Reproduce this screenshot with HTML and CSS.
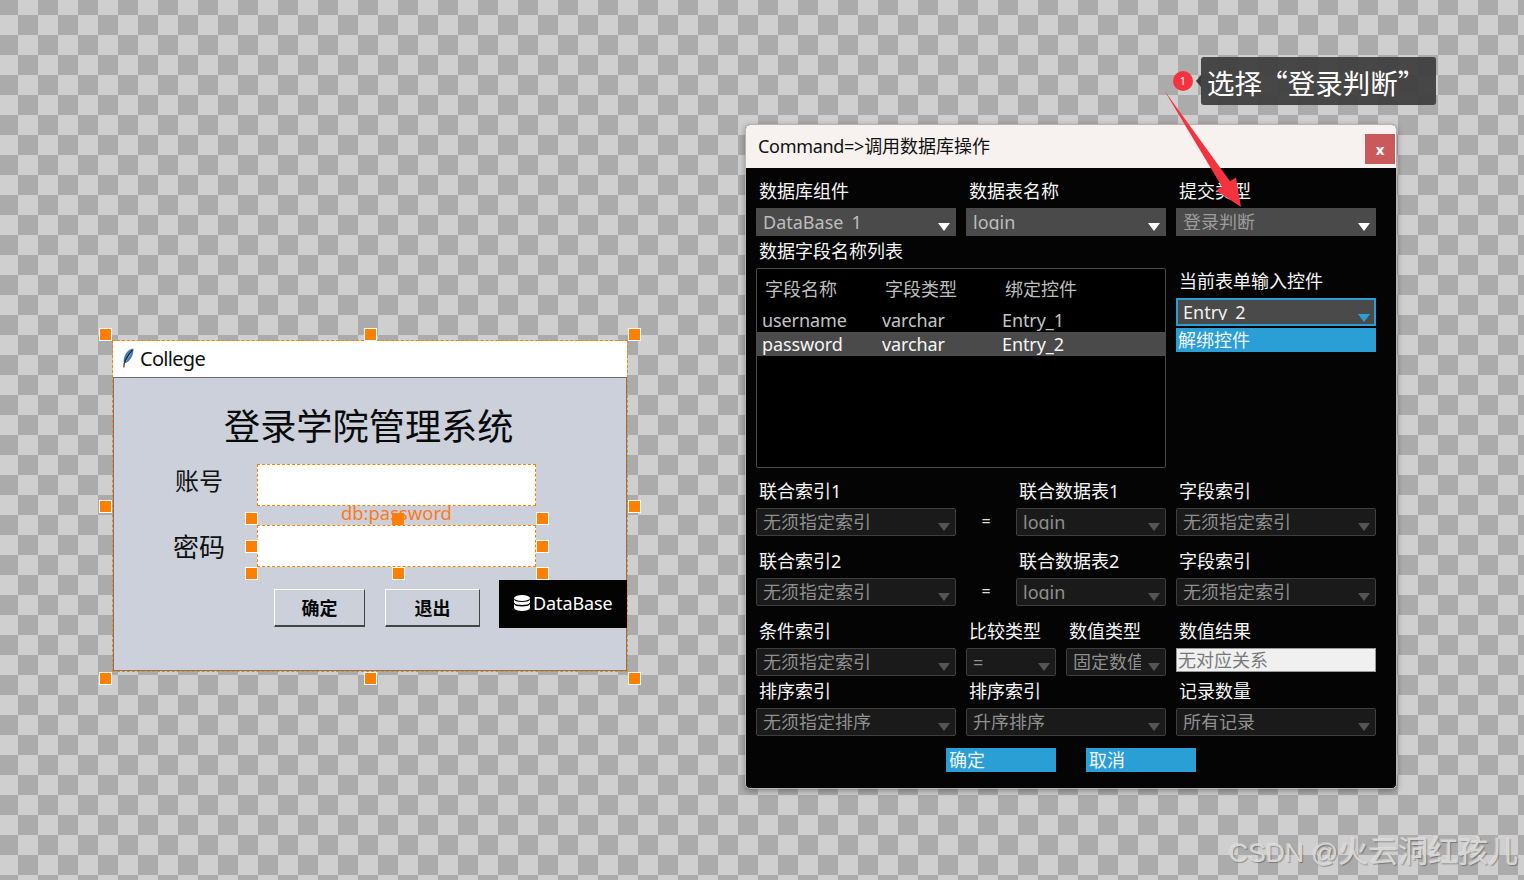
FILE: index.html
```html
<!DOCTYPE html>
<html lang="zh">
<head>
<meta charset="utf-8">
<title>Command</title>
<link rel="stylesheet" href="styles.css">
</head>
<body>
<div class="stage">

  <section class="designer">
    <div class="win">
      <div class="win-title">
        <svg class="feather" viewBox="0 0 12 20" width="12" height="20"><path d="M11.5 0.5C6.5 0.8 2 6 1.5 13L3 15.2C7.5 14 11.8 8 11.5 0.5Z" fill="#4a7fb5"/><path d="M9 4C8 8 5 10 4 13" stroke="#9cc0e0" stroke-width="1" fill="none"/><path d="M10.5 2C7 6 3.8 10.5 2.2 15.5" stroke="#14273a" stroke-width="1.2" fill="none"/><path d="M2.4 14.5L1.8 19.5" stroke="#555" stroke-width="1.4"/></svg>
        <span>College</span>
      </div>
      <div class="win-body"></div>
    </div>
    <div class="w-title">登录学院管理系统</div>
    <div class="w-lab lab1">账号</div>
    <div class="w-lab lab2">密码</div>
    <div class="entry e1"></div>
    <div class="entry e2"></div>
    <button class="tk tk1">确定</button>
    <button class="tk tk2">退出</button>
    <div class="dbbox">
      <svg viewBox="0 0 16 16" width="16" height="16"><ellipse cx="8" cy="3" rx="8" ry="3" fill="#fff"/><path d="M0 4.6C1 6.4 4 7.1 8 7.1S15 6.4 16 4.6V7.6C15 9.4 12 10.1 8 10.1S1 9.4 0 7.6Z" fill="#fff"/><path d="M0 8.9C1 10.7 4 11.4 8 11.4S15 10.7 16 8.9V13C15 15.2 12 16 8 16S1 15.2 0 13Z" fill="#fff"/></svg>
      <span>DataBase</span>
    </div>
    <i class="h h-a"></i><i class="h h-b"></i><i class="h h-c"></i><i class="h h-d"></i>
    <i class="h h-e"></i><i class="h h-f"></i><i class="h h-g"></i><i class="h h-h"></i>
    <i class="h h-i"></i><i class="h h-j flat"></i><i class="h h-k"></i><i class="h h-l"></i>
    <i class="h h-m"></i><i class="h h-n"></i><i class="h h-o"></i><i class="h h-p"></i>
    <div class="dbtag">db:password</div>
  </section>

  <section class="dialog">
    <header class="dlg-head">
      <span><span class="tight">Command=&gt;</span>调用数据库操作</span>
      <button class="close">x</button>
    </header>
    <div class="dlg-body">
      <div class="row labels">
        <label class="w200">数据库组件</label><label class="w200">数据表名称</label><label class="w200">提交类型</label>
      </div>
      <div class="row combos">
        <div class="combo lit w200"><span class="val">DataBase_1</span></div>
        <div class="combo lit w200"><span class="val">login</span></div>
        <div class="combo lit w200 dim"><span class="val">登录判断</span></div>
      </div>
      <div class="row labels l3"><label>数据字段名称列表</label></div>
      <div class="row listrow">
        <div class="list">
          <div class="lhead"><span>字段名称</span><span>字段类型</span><span>绑定控件</span></div>
          <div class="lrow"><span>username</span><span>varchar</span><span>Entry_1</span></div>
          <div class="lrow sel"><span>password</span><span>varchar</span><span>Entry_2</span></div>
        </div>
        <div class="side">
          <label>当前表单输入控件</label>
          <div class="combo lit focus w200"><span class="val">Entry_2</span></div>
          <button class="blue unbind">解绑控件</button>
        </div>
      </div>
      <div class="row labels l5">
        <label class="w200">联合索引1</label><label class="w40"></label><label class="w150">联合数据表1</label><label class="w200">字段索引</label>
      </div>
      <div class="row combos">
        <div class="combo w200"><span class="val">无须指定索引</span></div>
        <div class="eq">=</div>
        <div class="combo w150"><span class="val">login</span></div>
        <div class="combo w200"><span class="val">无须指定索引</span></div>
      </div>
      <div class="row labels l6">
        <label class="w200">联合索引2</label><label class="w40"></label><label class="w150">联合数据表2</label><label class="w200">字段索引</label>
      </div>
      <div class="row combos">
        <div class="combo w200"><span class="val">无须指定索引</span></div>
        <div class="eq">=</div>
        <div class="combo w150"><span class="val">login</span></div>
        <div class="combo w200"><span class="val">无须指定索引</span></div>
      </div>
      <div class="row labels l6">
        <label class="w200">条件索引</label><label class="w90">比较类型</label><label class="w100">数值类型</label><label class="w200">数值结果</label>
      </div>
      <div class="row combos">
        <div class="combo w200"><span class="val">无须指定索引</span></div>
        <div class="combo w90"><span class="val">=</span></div>
        <div class="combo w100"><span class="val">固定数值</span></div>
        <div class="result w200">无对应关系</div>
      </div>
      <div class="row labels l7">
        <label class="w200">排序索引</label><label class="w200">排序索引</label><label class="w200">记录数量</label>
      </div>
      <div class="row combos">
        <div class="combo w200"><span class="val">无须指定排序</span></div>
        <div class="combo w200"><span class="val">升序排序</span></div>
        <div class="combo w200"><span class="val">所有记录</span></div>
      </div>
      <div class="actions">
        <button class="blue act">确定</button>
        <button class="blue act">取消</button>
      </div>
    </div>
  </section>

  <svg class="arrow" viewBox="0 0 100 140" width="100" height="140">
    <path d="M3 10L69 101.3L75 97.5L80 127L55 110.6L61 106.8Z" fill="#f5333f"/>
  </svg>
  <div class="badge">1</div>
  <div class="tip">选择 “登录判断”</div>
  <div class="mark"><span class="mark-latin">CSDN @</span>火云洞红孩儿</div>
</div>
</body>
</html>
```
FILE: styles.css
```css
* { box-sizing: border-box; }
html, body { margin: 0; padding: 0; }
body { font-family: "Noto Sans", "Noto Sans CJK SC", sans-serif; }
button { font: inherit; padding: 0; border: 0; }

.stage {
  position: relative;
  width: 1524px;
  height: 880px;
  overflow: hidden;
  background-color: #cfcfcf;
  background-image: repeating-conic-gradient(#cfcfcf 0 25%, #ababab 0 50%);
  background-size: 40px 40px;
  background-position: -2px -5px;
}

/* form designer canvas */
.designer { position: absolute; left: 0; top: 0; width: 700px; height: 700px; }
.win {
  position: absolute; left: 112px; top: 340px; width: 516px; height: 332px;
  border: 1px dashed #ff8000;
  display: flex; flex-direction: column;
}
.win-title {
  height: 37px; background: #fff; border-bottom: 1px solid #6c6c74;
  display: flex; align-items: center; gap: 6px; padding: 0 0 2px 9px;
  font-size: 20px; color: #111;
  letter-spacing: -0.7px;
}
.win-body { flex: 1; background: #cbd0da; border-left: 1px solid #777; border-right: 1px solid #777; border-bottom: 1px solid #777; }
.w-title { position: absolute; left: 224px; top: 400px; font-size: 36.2px; line-height: 52px; color: #0a0a0a; white-space: nowrap; }
.w-lab { position: absolute; color: #111; line-height: 36px; white-space: nowrap; }
.lab1 { left: 175px; top: 463px; font-size: 24px; }
.lab2 { left: 173px; top: 529px; font-size: 26px; }
.entry { position: absolute; background: #fff; border: 1px dashed #ff8000; left: 257px; width: 279px; }
.e1 { top: 464px; height: 42px; }
.e2 { top: 525px; height: 42px; }
.tk {
  position: absolute; top: 589px; height: 38px; background: #cbd0da; color: #0a0a0a;
  font-size: 18px; font-weight: 700; line-height: 34px;
  border-top: 1px solid #fff; border-left: 1px solid #fff;
  border-right: 1px solid #444; border-bottom: 2px solid #444;
}
.tk1 { left: 274px; width: 91px; }
.tk2 { left: 385px; width: 95px; }
.dbbox {
  position: absolute; left: 499px; top: 580px; width: 128px; height: 48px;
  background: #030303; color: #fff; font-size: 18px; letter-spacing: -0.1px;
  display: flex; align-items: center; gap: 3px; padding: 0 0 2px 15px;
}
.h { position: absolute; width: 13px; height: 13px; background: #ff8000; border: 1px solid #fff; }
.h.flat { width: 12px; height: 12px; border: 0; }
.h-a { left: 99px; top: 328px; } .h-b { left: 364px; top: 328px; } .h-c { left: 628px; top: 328px; }
.h-d { left: 99px; top: 500px; } .h-e { left: 628px; top: 500px; }
.h-f { left: 99px; top: 672px; } .h-g { left: 364px; top: 672px; } .h-h { left: 628px; top: 672px; }
.h-i { left: 245px; top: 512px; } .h-j { left: 392px; top: 513px; } .h-k { left: 536px; top: 512px; }
.h-l { left: 245px; top: 540px; } .h-m { left: 536px; top: 540px; }
.h-n { left: 245px; top: 567px; } .h-o { left: 392px; top: 567px; } .h-p { left: 536px; top: 567px; }
.dbtag { position: absolute; left: 341px; top: 499px; font-size: 18.4px; line-height: 28px; color: #ff7a1a; white-space: nowrap; }

/* dialog */
.dialog {
  position: absolute; left: 745px; top: 124px; width: 652px; height: 665px;
  border: 1px solid #b5b5b5; border-radius: 5px; overflow: hidden;
  background: #040404;
  box-shadow: 0 2px 6px rgba(0,0,0,.35);
  display: flex; flex-direction: column;
}
.dlg-head {
  height: 43px; flex: none; background: #f7f1f0; color: #111;
  font-size: 18px; display: flex; justify-content: space-between;
  padding: 0 1px 0 12px; line-height: 42px;
}
.tight { letter-spacing: -0.3px; }
.close {
  width: 30px; height: 30px; margin-top: 9px; background: #c9595a; color: #fff;
  font-size: 15px; font-weight: 700; line-height: 28px;
}
.dlg-body { flex: 1; padding: 11px 20px 0 10px; display: flex; flex-direction: column; }
.row { display: flex; gap: 10px; }
.labels { height: 24px; margin-bottom: 5px; }
.labels.l3 { margin-top: 3px; margin-bottom: 5px; }
.labels.l5 { margin-top: 11px; }
.labels.l6 { margin-top: 13px; }
.labels.l7 { margin-top: 3px; }
label { display: block; font-size: 18px; line-height: 24px; color: #f4f4f4; padding-left: 3px; white-space: nowrap; }
.w200 { width: 200px; flex: none; }
.w150 { width: 150px; flex: none; }
.w100 { width: 100px; flex: none; }
.w90 { width: 90px; flex: none; }
.w40 { width: 40px; flex: none; }

.combo {
  position: relative; height: 28px; padding: 0 24px 0 6px; overflow: hidden;
  background: #1a1a1a; border: 1px solid #3e3e3e; border-radius: 2px;
  color: #8f8f8f; font-size: 18px;
}
.combo::after {
  content: ""; position: absolute; right: 5px; bottom: 4px;
  border-left: 6px solid transparent; border-right: 6px solid transparent;
  border-top: 8px solid #555;
}
.val { display: block; height: 21px; line-height: 26px; overflow: hidden; white-space: nowrap; }
.combo.lit { background: #4a4a4a; border-color: #4a4a4a; border-radius: 0; color: #bdbdbd; }
.combo.lit::after { border-top-color: #fff; }
.combo.lit.dim { color: #9c9c9c; }
.combo.focus { border: 2px solid #2a9fd6; color: #f0f0f0; padding-left: 5px; }
.combo.focus .val { line-height: 24px; height: 20px; }
.combo.focus::after { border-top-color: #2a9fd6; right: 4px; bottom: 2px; }
.eq { width: 40px; flex: none; text-align: center; color: #ddd; font-size: 16px; line-height: 26px; }
.result {
  height: 24px; background: #f0f0f0; border: 1px solid #999; color: #7a7a7a;
  font-size: 18px; line-height: 22px; padding-left: 1px; overflow: hidden;
}

.listrow { height: 200px; margin-bottom: 0; }
.list { width: 410px; flex: none; background: #000; border: 1px solid #4a4a4a; border-radius: 2px; padding-top: 8px; }
.lhead, .lrow { display: grid; grid-template-columns: 120px 120px 1fr; font-size: 18px; }
.lhead { height: 24px; line-height: 24px; color: #bdbdbd; padding-left: 8px; margin-bottom: 7px; }
.lrow { height: 24px; line-height: 24px; color: #c4c4c4; padding-left: 5px; letter-spacing: -0.1px; }
.lrow.sel { background: #4a4a4a; color: #f6f6f6; }
.side { width: 200px; flex: none; display: flex; flex-direction: column; padding-top: 1px; }
.side label { margin-bottom: 5px; }
.blue { background: #2a9fd6; color: #f4f4f4; font-size: 18px; text-align: left; padding-left: 3px; }
.unbind { height: 24px; line-height: 24px; margin-top: 2px; padding-left: 2px; }
.actions { display: flex; gap: 30px; padding-left: 190px; margin-top: 12px; }
.act { width: 110px; height: 24px; line-height: 24px; }

/* annotations */
.arrow { position: absolute; left: 1161px; top: 80px; }
.badge {
  position: absolute; left: 1173px; top: 71px; width: 20px; height: 20px; border-radius: 50%;
  background: #f5333f; color: #fff; font-size: 11px; line-height: 20px; text-align: center;
}
.tip {
  position: absolute; left: 1201px; top: 57px; width: 235px; height: 48px; border-radius: 3px;
  background: rgba(60,60,60,.92); color: #fff; font-size: 27.5px; line-height: 50px; padding-left: 6px; white-space: nowrap;
  font-family: "Noto Sans CJK SC", sans-serif; word-spacing: -8px;
}
.tip::before {
  content: ""; position: absolute; left: -5px; top: 18px;
  border-top: 6px solid transparent; border-bottom: 6px solid transparent; border-right: 5px solid #3c3c3c;
}
.mark {
  position: absolute; left: 1229px; top: 829px; font-size: 30px; line-height: 40px; white-space: nowrap;
  font-family: "Noto Sans CJK SC", sans-serif;
  color: #d6d6d6; text-shadow: 1px 1px 1px rgba(0,0,0,.3), -1px -1px 0 rgba(255,255,255,.3);
}
.mark-latin { font-family: "Liberation Sans", sans-serif; font-size: 26.5px; }
```
